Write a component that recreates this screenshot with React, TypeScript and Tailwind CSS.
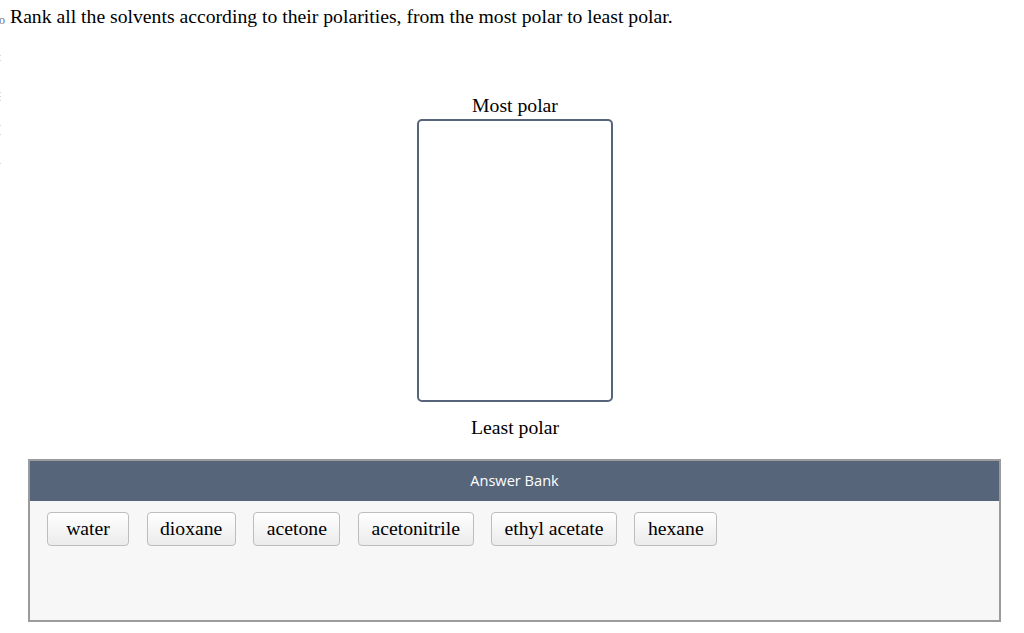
import React from 'react';

const solvents = ['water', 'dioxane', 'acetone', 'acetonitrile', 'ethyl acetate', 'hexane'];

const serif = { fontFamily: '"Liberation Serif", "Times New Roman", serif' };

const App = () => {
  return (
    <div className="relative w-[1024px] h-[633px] bg-white overflow-hidden text-black" style={serif}>
      {/* cut-off margin marks */}
      <span className="absolute left-[-1px] top-[14px] text-[12px] leading-none text-gray-500">o</span>
      <div className="absolute left-0 top-[55px] flex flex-col gap-[4px]">
        <span className="w-[1px] h-[1px] bg-gray-300" />
        <span className="w-[1px] h-[1px] bg-gray-300" />
      </div>
      <div className="absolute left-0 top-[92px] flex flex-col gap-[3px]">
        <span className="w-[1px] h-[1px] bg-gray-300" />
        <span className="w-[1px] h-[1px] bg-gray-300" />
        <span className="w-[1px] h-[1px] bg-gray-300" />
      </div>
      <div className="absolute left-0 top-[125px] flex flex-col gap-[8px]">
        <span className="w-[1px] h-[1px] bg-gray-300" />
        <span className="w-[1px] h-[1px] bg-gray-300" />
      </div>
      <span className="absolute left-0 top-[163px] w-[1px] h-[1px] bg-gray-300" />

      {/* Question */}
      <p className="pt-[4px] pl-[10px] text-[19.7px] leading-[24px]">
        Rank all the solvents according to their polarities, from the most polar to least polar.
      </p>

      {/* Ranking column */}
      <div className="mt-[65px] ml-[417px] w-[196px] flex flex-col items-center">
        <div className="text-[19.7px] leading-[24px]">Most polar</div>
        <div className="mt-[2px] w-[196px] h-[283px] border-2 border-[#56657a] rounded-[5px] bg-white" />
        <div className="mt-[13px] text-[19.7px] leading-[24px]">Least polar</div>
      </div>

      {/* Answer bank */}
      <div className="mt-[20px] ml-[28px] w-[973px] h-[163px] border-2 border-[#9b9b9b] flex flex-col">
        <div
          className="h-[40px] bg-[#56657a] flex items-center justify-center text-[14.6px] font-medium text-white"
          style={{ fontFamily: '"Open Sans", sans-serif' }}
        >
          Answer Bank
        </div>
        <div className="flex-1 bg-[#f7f7f7] pt-[11px] pl-[17px] flex items-start gap-[17.5px]">
          {solvents.map((s) => (
            <div
              key={s}
              className="h-[34px] min-w-[82px] px-[12.5px] flex items-center justify-center border border-[#bdbdbd] rounded-[4px] bg-gradient-to-b from-white to-[#ebebeb] text-[19.7px] leading-none"
            >
              {s}
            </div>
          ))}
        </div>
      </div>
    </div>
  );
};

export default App;
